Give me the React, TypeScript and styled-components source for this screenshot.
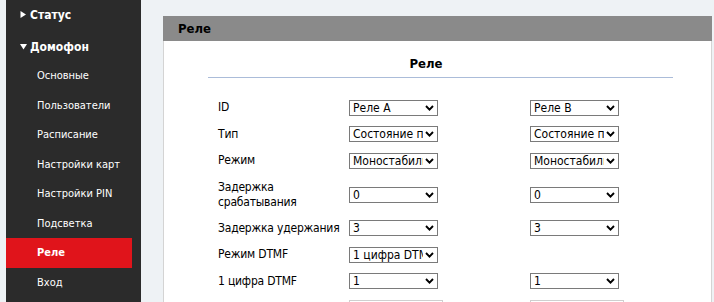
import React from "react";
import styled, { createGlobalStyle } from "styled-components";

const GlobalStyle = createGlobalStyle`
  html, body {
    margin: 0;
    padding: 0;
    height: 302px;
    overflow: hidden;
    background: #eef2f5;
    font-family: "DejaVu Sans Condensed", "DejaVu Sans", sans-serif;
    font-stretch: condensed;
  }
`;

type FormRow = {
  label: string;
  a?: string;
  b?: string;
  input?: boolean;
};

const subMenu = [
  "Основные",
  "Пользователи",
  "Расписание",
  "Настройки карт",
  "Настройки PIN",
  "Подсветка",
  "Реле",
  "Вход"
];

const rows: FormRow[] = [
  { label: "ID", a: "Реле A", b: "Реле B" },
  { label: "Тип", a: "Состояние по умолчанию", b: "Состояние по умолчанию" },
  { label: "Режим", a: "Моностабильный", b: "Моностабильный" },
  { label: "Задержка срабатывания", a: "0", b: "0" },
  { label: "Задержка удержания", a: "3", b: "3" },
  { label: "Режим DTMF", a: "1 цифра DTMF" },
  { label: "1 цифра DTMF", a: "1", b: "1" },
  { label: "", input: true }
];

const Chevron = () => (
  <ChevronSvg width="9" height="6" viewBox="0 0 9 6">
    <polyline points="1,1 4.5,4.6 8,1" fill="none" stroke="#000" strokeWidth="1.9" />
  </ChevronSvg>
);

const Select = ({ value }: { value: string }) => (
  <SelectWrap>
    <StyledSelect defaultValue={value}>
      <option>{value}</option>
    </StyledSelect>
    <Chevron />
  </SelectWrap>
);

const Arrow = ({ open }: { open?: boolean }) =>
  open ? (
    <ArrowSvg width="7" height="7" viewBox="0 0 7 7">
      <polygon points="0,1 7,1 3.5,6.5" fill="#fff" />
    </ArrowSvg>
  ) : (
    <ArrowSvg width="7" height="7" viewBox="0 0 7 7">
      <polygon points="0.5,0 6,3.5 0.5,7" fill="#fff" />
    </ArrowSvg>
  );

const App = () => {
  return (
    <>
      <GlobalStyle />
      <Page>
        <Sidebar>
          <Menu>
            <GroupTitle>
              <Arrow />
              Статус
            </GroupTitle>
            <GroupTitle $spaced>
              <Arrow open />
              Домофон
            </GroupTitle>
            {subMenu.map((item) => (
              <SubItem key={item} $active={item === "Реле"}>
                {item}
              </SubItem>
            ))}
          </Menu>
        </Sidebar>
        <Main>
          <PanelHeader>Реле</PanelHeader>
          <Panel>
            <Inner>
              <SectionTitle>Реле</SectionTitle>
              <Form>
                {rows.map((row, i) => (
                  <Row key={i}>
                    <Label>{row.label}</Label>
                    <Cell>
                      {row.input ? <TextInput /> : row.a && <Select value={row.a} />}
                    </Cell>
                    <Cell>
                      {row.input ? <TextInput /> : row.b && <Select value={row.b} />}
                    </Cell>
                  </Row>
                ))}
              </Form>
            </Inner>
          </Panel>
        </Main>
      </Page>
    </>
  );
};

const Page = styled.div`
  display: flex;
  align-items: flex-start;
  height: 302px;
`;

const Sidebar = styled.nav`
  width: 135px;
  height: 302px;
  margin-left: 6px;
  background: #2b2b2b;
  flex-shrink: 0;
`;

const Menu = styled.div`
  width: 126px;
  display: flex;
  flex-direction: column;
`;

const GroupTitle = styled.div<{ $spaced?: boolean }>`
  display: flex;
  align-items: center;
  height: 29px;
  margin-top: ${(p) => (p.$spaced ? "3px" : "0")};
  padding-left: 14px;
  color: #fff;
  font-size: 12px;
  font-weight: bold;
`;

const ArrowSvg = styled.svg`
  margin-right: 3px;
  flex-shrink: 0;
`;

const SubItem = styled.div<{ $active?: boolean }>`
  height: 29.5px;
  line-height: 29.5px;
  padding-left: 31px;
  font-size: 11px;
  color: #fff;
  font-weight: ${(p) => (p.$active ? "bold" : "normal")};
  background: ${(p) => (p.$active ? "#e0141b" : "transparent")};
`;

const Main = styled.main`
  width: 549px;
  margin-left: 22px;
  margin-top: 16px;
`;

const PanelHeader = styled.div`
  height: 25px;
  line-height: 25px;
  padding-left: 15px;
  background: #8a8a8a;
  color: #000;
  font-size: 13px;
  font-weight: bold;
`;

const Panel = styled.div`
  background: #fff;
  border: 1px solid #d4d4d4;
  border-top: none;
  height: 300px;
`;

const Inner = styled.div`
  width: 465px;
  margin-left: 44px;
`;

const SectionTitle = styled.div`
  padding: 14px 29px 4px 0;
  line-height: 18px;
  text-align: center;
  font-size: 13px;
  font-weight: bold;
  color: #000;
  border-bottom: 1px solid #abbcd9;
`;

const Form = styled.div`
  margin-top: 16.5px;
  padding-left: 10px;
  display: flex;
  flex-direction: column;
`;

const Row = styled.div`
  display: flex;
  align-items: center;
  padding: 5.3px 0;
`;

const Label = styled.div`
  flex: 0 0 131px;
  font-size: 12px;
  line-height: 15px;
  letter-spacing: -0.2px;
  color: #000;
`;

const Cell = styled.div`
  display: flex;
  align-items: center;
  flex: 0 0 181px;
  min-height: 16px;
  &:last-child {
    flex: 1 0 auto;
  }
`;

const SelectWrap = styled.div`
  position: relative;
  width: 89px;
  height: 16px;
`;

const StyledSelect = styled.select`
  display: block;
  appearance: none;
  width: 100%;
  height: 16px;
  margin: 0;
  padding: 0 14px 0 3px;
  box-sizing: border-box;
  border: 1px solid #7a7a7a;
  border-radius: 0;
  background: #fff;
  color: #000;
  font-family: "DejaVu Sans Condensed", "DejaVu Sans", sans-serif;
  font-stretch: condensed;
  font-size: 12px;
  line-height: 14px;
  outline: none;
`;

const ChevronSvg = styled.svg`
  position: absolute;
  right: 4px;
  top: 5px;
  pointer-events: none;
`;

const TextInput = styled.input`
  display: block;
  width: 94px;
  height: 18px;
  margin: 0;
  box-sizing: border-box;
  border: 1px solid #cfcfcf;
  background: #fff;
`;

export default App;
